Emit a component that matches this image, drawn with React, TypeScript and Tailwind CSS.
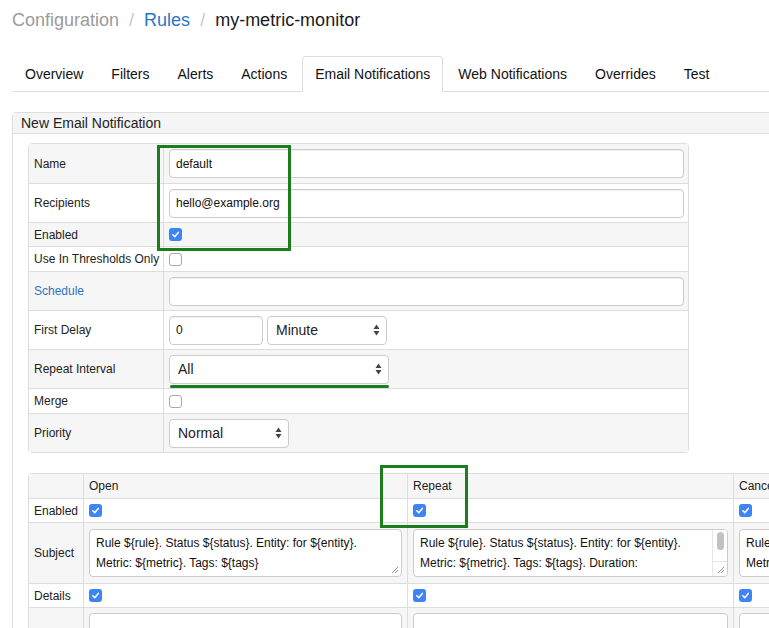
import type { ReactNode } from 'react';

const tabs = ['Overview', 'Filters', 'Alerts', 'Actions', 'Email Notifications', 'Web Notifications', 'Overrides', 'Test'];

function Check({ on }: { on?: boolean }) {
  if (!on) {
    return <span className="inline-block w-[13px] h-[13px] rounded-[3px] border border-[#a9a9a9] bg-white" />;
  }
  return (
    <span className="inline-flex w-[13px] h-[13px] rounded-[3px] bg-[#3d85f6] items-center justify-center">
      <svg width="9" height="9" viewBox="0 0 10 10">
        <path d="M2 5.3 L4.2 7.4 L8.1 2.7" stroke="white" strokeWidth="1.7" fill="none" strokeLinecap="round" strokeLinejoin="round" />
      </svg>
    </span>
  );
}

function Input({ value, className = '' }: { value?: string; className?: string }) {
  return (
    <div className={`h-[29px] bg-white border border-[#ccc] rounded-[4px] shadow-[inset_0_1px_1px_rgba(0,0,0,0.06)] px-[6px] flex items-center text-[12px] text-[#111] ${className}`}>
      {value}
    </div>
  );
}

function Arrows() {
  return (
    <svg width="7" height="12" viewBox="0 0 7 12">
      <path d="M3.5 0.5 L6.5 5 L0.5 5 Z" fill="#444" />
      <path d="M3.5 11.5 L6.5 7 L0.5 7 Z" fill="#444" />
    </svg>
  );
}

function Select({ value, className = '' }: { value: string; className?: string }) {
  return (
    <div className={`h-[29px] bg-white border border-[#ccc] rounded-[4px] pl-[8px] pr-[6px] flex items-center justify-between text-[14px] text-[#222] ${className}`}>
      <span>{value}</span>
      <Arrows />
    </div>
  );
}

function ResizeGrip() {
  return (
    <svg className="absolute right-[2px] bottom-[2px]" width="8" height="8" viewBox="0 0 8 8">
      <path d="M1 7 L7 1 M4 7 L7 4" stroke="#888" strokeWidth="0.9" />
    </svg>
  );
}

function TextBox({ lines, scroll, className = '' }: { lines: string[]; scroll?: boolean; className?: string }) {
  return (
    <div className={`relative h-[48px] bg-white border border-[#ccc] rounded-[4px] overflow-hidden ${className}`}>
      <div className="pl-[6px] pt-[3px] text-[12px] leading-[20px] text-[#111] whitespace-nowrap">
        {lines.map((l, i) => (
          <div key={i}>{l}</div>
        ))}
      </div>
      {scroll && (
        <div className="absolute right-0 top-0 bottom-0 w-[15px] bg-white border-l border-[#e6e6e6]">
          <div className="mx-auto mt-[2px] w-[7px] h-[18px] rounded-full bg-[#c2c2c2]" />
          <div className="absolute left-0 right-0 bottom-0 h-[15px] border-t border-[#e6e6e6]" />
        </div>
      )}
      <ResizeGrip />
    </div>
  );
}

type Row = { label: ReactNode; h: string; stripe: boolean; body: ReactNode };

const rows: Row[] = [
  { label: 'Name', h: 'h-[39px]', stripe: true, body: <Input value="default" className="w-full" /> },
  { label: 'Recipients', h: 'h-[39px]', stripe: false, body: <Input value="hello@example.org" className="w-full" /> },
  { label: 'Enabled', h: 'h-[24px]', stripe: true, body: <Check on /> },
  { label: 'Use In Thresholds Only', h: 'h-[25px]', stripe: false, body: <Check /> },
  { label: <span className="text-[#2f74c0]">Schedule</span>, h: 'h-[39px]', stripe: true, body: <Input className="w-full" /> },
  {
    label: 'First Delay',
    h: 'h-[39px]',
    stripe: false,
    body: (
      <div className="flex gap-[4px]">
        <Input value="0" className="w-[94px]" />
        <Select value="Minute" className="w-[120px]" />
      </div>
    ),
  },
  {
    label: 'Repeat Interval',
    h: 'h-[39px]',
    stripe: true,
    body: (
      <div className="relative">
        <Select value="All" className="w-[220px]" />
        <div className="absolute left-[1px] -bottom-[4px] w-[219px] h-[3px] rounded-full bg-[#1b7d1b]" />
      </div>
    ),
  },
  { label: 'Merge', h: 'h-[25px]', stripe: false, body: <Check /> },
  { label: 'Priority', h: 'h-[39px]', stripe: true, body: <Select value="Normal" className="w-[120px]" /> },
];

const subj1 = ['Rule ${rule}. Status ${status}. Entity: for ${entity}.', 'Metric: ${metric}. Tags: ${tags}'];
const subj2 = ['Rule ${rule}. Status ${status}. Entity: for ${entity}.', 'Metric: ${metric}. Tags: ${tags}. Duration:'];

const cols = [
  { name: 'Open', w: 'w-[324px]', subj: subj1, scroll: false },
  { name: 'Repeat', w: 'w-[326px]', subj: subj2, scroll: true },
  { name: 'Cancel', w: 'w-[326px]', subj: subj1, scroll: false },
];

export default function App() {
  return (
    <div className="w-[769px] h-[628px] overflow-hidden bg-white font-['Liberation_Sans',Arial,sans-serif] text-[#222]">
      <div className="h-[40px] pl-[12px] flex items-center text-[18px]">
        <span className="text-[#9b9b9b]">Configuration</span>
        <span className="px-[10px] text-[#c8c8c8]">/</span>
        <span className="text-[#2a78c2]">Rules</span>
        <span className="px-[10px] text-[#c8c8c8]">/</span>
        <span className="text-[#1a1a1a]">my-metric-monitor</span>
      </div>

      <div className="mt-[16px] ml-[12px] w-[900px] flex border-b border-[#ddd]">
        {tabs.map((t) => {
          const active = t === 'Email Notifications';
          return (
            <div
              key={t}
              className={`-mb-px mr-[2px] px-[12px] py-[7px] leading-[20px] text-[14px] text-[#111] border rounded-t-[4px] ${
                active ? 'border-[#ddd] border-b-white bg-white' : 'border-transparent'
              }`}
            >
              {t}
            </div>
          );
        })}
      </div>

      <div className="mt-[20px] ml-[12px] w-[1000px] border border-[#ddd] rounded-tl-[4px]">
        <div className="h-[21px] bg-[#f5f5f5] border-b border-[#ddd] px-[8px] pt-[1px] text-[14px] leading-[19px] text-[#222]">
          New Email Notification
        </div>
        <div className="pt-[9px] pl-[15px]">
          <div className="relative w-[661px] border border-[#ddd] rounded-[4px] text-[12px]">
            {rows.map((r, i) => (
              <div key={i} className={`flex ${r.h} ${i > 0 ? 'border-t border-[#ddd]' : ''} ${r.stripe ? 'bg-[#f6f6f6]' : 'bg-white'}`}>
                <div className="w-[135px] shrink-0 border-r border-[#ddd] pl-[5px] flex items-center">{r.label}</div>
                <div className="flex-1 pl-[5px] pr-[4px] flex items-center">{r.body}</div>
              </div>
            ))}
            <div className="absolute left-[128px] top-[1px] w-[134px] h-[106px] border-[3px] border-[#1b7d1b]" />
          </div>

          <div className="relative mt-[20px] w-[1040px] border border-[#ddd] rounded-tl-[4px] text-[12px]">
            <div className="flex h-[24px] bg-[#f6f6f6]">
              <div className="w-[55px] border-r border-[#ddd]" />
              {cols.map((c) => (
                <div key={c.name} className={`${c.w} border-r border-[#ddd] pl-[5px] flex items-center`}>
                  {c.name}
                </div>
              ))}
            </div>
            <div className="flex h-[24px] border-t border-[#ddd] bg-white">
              <div className="w-[55px] border-r border-[#ddd] pl-[5px] flex items-center">Enabled</div>
              {cols.map((c) => (
                <div key={c.name} className={`${c.w} border-r border-[#ddd] pl-[5px] flex items-center`}>
                  <Check on />
                </div>
              ))}
            </div>
            <div className="flex h-[61px] border-t border-[#ddd] bg-[#f6f6f6]">
              <div className="w-[55px] border-r border-[#ddd] pl-[5px] flex items-center">Subject</div>
              {cols.map((c) => (
                <div key={c.name} className={`${c.w} border-r border-[#ddd] px-[5px] flex items-center`}>
                  <TextBox lines={c.subj} scroll={c.scroll} className="w-full" />
                </div>
              ))}
            </div>
            <div className="flex h-[24px] border-t border-[#ddd] bg-white">
              <div className="w-[55px] border-r border-[#ddd] pl-[5px] flex items-center">Details</div>
              {cols.map((c) => (
                <div key={c.name} className={`${c.w} border-r border-[#ddd] pl-[5px] flex items-center`}>
                  <Check on />
                </div>
              ))}
            </div>
            <div className="flex h-[61px] border-t border-[#ddd] bg-[#f6f6f6]">
              <div className="w-[55px] border-r border-[#ddd]" />
              {cols.map((c) => (
                <div key={c.name} className={`${c.w} border-r border-[#ddd] px-[5px] pt-[5px]`}>
                  <div className="h-[48px] bg-white border border-[#ccc] rounded-[4px]" />
                </div>
              ))}
            </div>
            <div className="absolute left-[351px] -top-[9px] w-[88px] h-[63px] border-[3px] border-[#1b7d1b]" />
          </div>
        </div>
      </div>
    </div>
  );
}
